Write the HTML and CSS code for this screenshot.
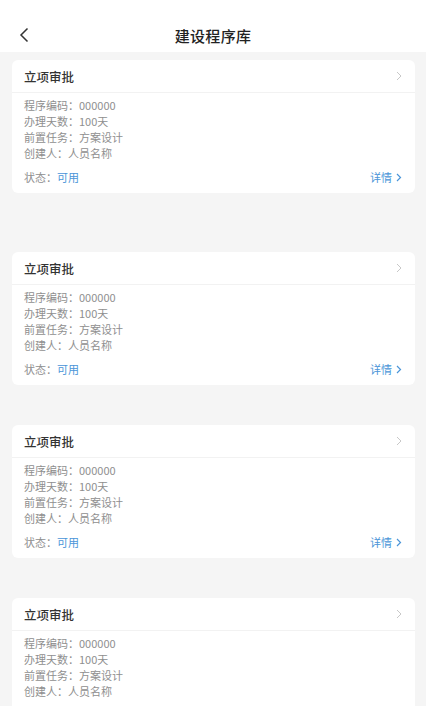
FILE: index.html
```html
<!DOCTYPE html>
<html lang="zh-CN">
<head>
<meta charset="utf-8">
<title>建设程序库</title>
<link rel="stylesheet" href="styles.css">
</head>
<body>
<header class="nav">
  <span class="back"><svg width="10" height="16" viewBox="0 0 10 16"><path d="M8.5 1.5 L2 8 L8.5 14.5" fill="none" stroke="#333" stroke-width="1.5"/></svg></span>
  <h1 class="nav-title">建设程序库</h1>
</header>
<main class="list">
  <section class="card card-first">
    <div class="card-head"><span class="card-title">立项审批</span><svg class="chev" width="6" height="10" viewBox="0 0 6 10"><path d="M1 1 L5 5 L1 9" fill="none" stroke="#c8c8c8" stroke-width="1"/></svg></div>
    <div class="card-body">
      <p class="line">程序编码：000000</p>
      <p class="line">办理天数：100天</p>
      <p class="line">前置任务：方案设计</p>
      <p class="line">创建人：人员名称</p>
      <div class="foot"><span class="line">状态：<span class="blue">可用</span></span><span class="detail">详情<svg width="6" height="9" viewBox="0 0 6 9"><path d="M1 1 L4.5 4.5 L1 8" fill="none" stroke="#4a95d8" stroke-width="1.2"/></svg></span></div>
    </div>
  </section>
  <section class="card">
    <div class="card-head"><span class="card-title">立项审批</span><svg class="chev" width="6" height="10" viewBox="0 0 6 10"><path d="M1 1 L5 5 L1 9" fill="none" stroke="#c8c8c8" stroke-width="1"/></svg></div>
    <div class="card-body">
      <p class="line">程序编码：000000</p>
      <p class="line">办理天数：100天</p>
      <p class="line">前置任务：方案设计</p>
      <p class="line">创建人：人员名称</p>
      <div class="foot"><span class="line">状态：<span class="blue">可用</span></span><span class="detail">详情<svg width="6" height="9" viewBox="0 0 6 9"><path d="M1 1 L4.5 4.5 L1 8" fill="none" stroke="#4a95d8" stroke-width="1.2"/></svg></span></div>
    </div>
  </section>
  <section class="card">
    <div class="card-head"><span class="card-title">立项审批</span><svg class="chev" width="6" height="10" viewBox="0 0 6 10"><path d="M1 1 L5 5 L1 9" fill="none" stroke="#c8c8c8" stroke-width="1"/></svg></div>
    <div class="card-body">
      <p class="line">程序编码：000000</p>
      <p class="line">办理天数：100天</p>
      <p class="line">前置任务：方案设计</p>
      <p class="line">创建人：人员名称</p>
      <div class="foot"><span class="line">状态：<span class="blue">可用</span></span><span class="detail">详情<svg width="6" height="9" viewBox="0 0 6 9"><path d="M1 1 L4.5 4.5 L1 8" fill="none" stroke="#4a95d8" stroke-width="1.2"/></svg></span></div>
    </div>
  </section>
  <section class="card">
    <div class="card-head"><span class="card-title">立项审批</span><svg class="chev" width="6" height="10" viewBox="0 0 6 10"><path d="M1 1 L5 5 L1 9" fill="none" stroke="#c8c8c8" stroke-width="1"/></svg></div>
    <div class="card-body">
      <p class="line">程序编码：000000</p>
      <p class="line">办理天数：100天</p>
      <p class="line">前置任务：方案设计</p>
      <p class="line">创建人：人员名称</p>
      <div class="foot"><span class="line">状态：<span class="blue">可用</span></span><span class="detail">详情<svg width="6" height="9" viewBox="0 0 6 9"><path d="M1 1 L4.5 4.5 L1 8" fill="none" stroke="#4a95d8" stroke-width="1.2"/></svg></span></div>
    </div>
  </section>
</main>
</body>
</html>
```
FILE: styles.css
```css
html, body {
  margin: 0;
  padding: 0;
}
body {
  background: #f5f5f5;
  font-family: "Noto Sans CJK SC", "Noto Sans", sans-serif;
  color: #333;
  height: 706px;
  overflow: hidden;
}
.nav {
  height: 52px;
  background: #fff;
  display: flex;
  align-items: center;
  justify-content: center;
  padding-top: 18px;
  box-sizing: border-box;
  position: relative;
}
.back {
  position: absolute;
  left: 19px;
  top: 27px;
  display: flex;
}
.nav-title {
  margin: 0;
  font-size: 15px;
  font-weight: 500;
  color: #222;
  letter-spacing: 0.3px;
}
.list {
  display: flex;
  flex-direction: column;
  gap: 40px;
  padding: 8px 11px 0 12px;
}
.card {
  background: #fff;
  border-radius: 6px;
  flex-shrink: 0;
}
.card-first {
  margin-bottom: 19px;
}
.card-head {
  height: 32px;
  display: flex;
  align-items: center;
  justify-content: space-between;
  padding: 0 13px 0 12px;
  border-bottom: 1px solid #f2f2f2;
}
.card-title {
  font-size: 12.5px;
  font-weight: 500;
  color: #333;
}
.chev {
  display: block;
}
.card-body {
  padding: 4px 13px 8px 12px;
}
.line {
  margin: 0;
  font-size: 11px;
  line-height: 16px;
  color: #8f8f8f;
}
.foot {
  display: flex;
  justify-content: space-between;
  align-items: center;
  margin-top: 8px;
  height: 16px;
}
.blue {
  color: #4a95d8;
}
.detail {
  font-size: 11px;
  color: #4a95d8;
  display: flex;
  align-items: center;
  gap: 4px;
}
```
